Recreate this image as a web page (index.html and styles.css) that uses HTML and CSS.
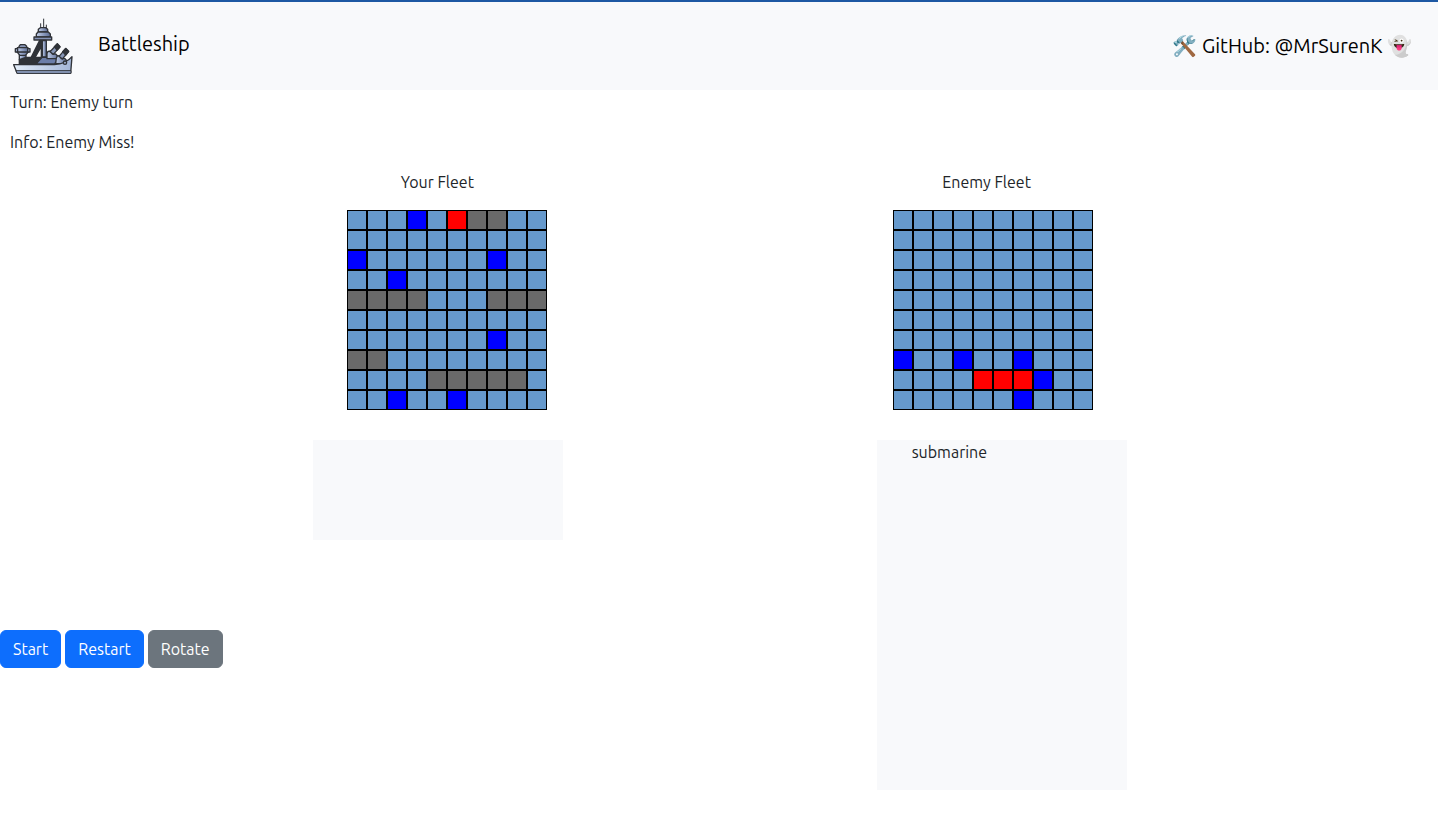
FILE: index.html
```html
<!DOCTYPE html>
<html lang="en">
<head>
<meta charset="utf-8">
<title>Battleship</title>
<link rel="stylesheet" href="styles.css">
</head>
<body>
<header class="navbar">
  <div class="brand">
    <svg class="logo" viewBox="0 0 210 192" aria-hidden="true">
      <defs>
        <linearGradient id="hull" x1="0" y1="0" x2="1" y2="0"><stop offset="0" stop-color="#e4eefa"/><stop offset="1" stop-color="#a3b5d6"/></linearGradient>
        <linearGradient id="steel" x1="0" y1="0" x2="1" y2="0"><stop offset="0" stop-color="#c3d0ea"/><stop offset="1" stop-color="#596a94"/></linearGradient>
      </defs>
      <g stroke="#303338" stroke-width="4" stroke-linejoin="round">
        <path d="M107 14V42M98 28V46M115 32V46" fill="none" stroke-width="3"/>
        <path d="M91 54V46L97 41H113L119 46V54Z" fill="url(#steel)"/>
        <path d="M85 69V60L90 54H121L127 60V69Z" fill="url(#steel)"/>
        <path d="M78 69H131V78H78Z" fill="#8593b5"/>
        <path d="M95 79L70 129H82L100 97V129H114V79Z" fill="#303338"/>
        <path d="M103 80H115V129H103Z" fill="url(#steel)"/>
        <path d="M34 120H54V137H34Z" fill="url(#steel)"/>
        <path d="M26 113H62L52 124H36Z" fill="url(#steel)"/>
        <path d="M33 101V97L37 92H51L56 97V101Z" fill="#8795b5"/>
        <path d="M28 101H60V114H28Z" fill="url(#steel)"/>
        <path d="M22 104H29V114H22ZM59 104H66V114H59Z" fill="#9aaac9"/>
        <path d="M34 137L54 130H102L86 153H34Z" fill="#303338"/>
        <path d="M102 130H158L139 150H84Z" fill="#6b7da8"/>
        <path d="M117 118L120 112L128 111L133 120H143L151 128V134H117Z" fill="url(#steel)"/>
        <path d="M126 113L148 90L156 99L136 121Z" fill="#8796b7"/>
        <path d="M139 98L148 89L156 98L147 108Z" fill="#303338"/>
        <path d="M145 132L148 126L156 125L160 134H171L178 142V149H143Z" fill="url(#steel)"/>
        <path d="M153 127L173 104L182 113L163 135Z" fill="#8796b7"/>
        <path d="M164 113L173 103L182 112L173 123Z" fill="#303338"/>
        <path d="M17 152H139Q174 150 192 128L188 177H27Z" fill="url(#hull)"/>
        <path d="M24 170H189V178H27Z" fill="#91a3c7" stroke-width="3"/>
        <circle cx="171" cy="146" r="5" fill="#9aabca"/>
      </g>
    </svg>
    <span class="brand-name">Battleship</span>
  </div>
  <a class="github" href="#">🛠️ GitHub: @MrSurenK 👻</a>
</header>
<main>
  <p class="status">Turn: Enemy turn</p>
  <p class="status">Info: Enemy Miss!</p>
  <div class="titles">
    <p class="title">Your Fleet</p>
    <p class="title">Enemy Fleet</p>
  </div>
  <div class="boards">
    <div class="board" data-rows="...m.hss.. .......... m......m.. ..m....... ssss...sss .......... .......m.. ss........ ....sssss. ..m..m...."></div>
    <div class="board" data-rows=".......... .......... .......... .......... .......... .......... .......... m..m..m... ....hhhm.. ......m..."></div>
  </div>
  <div class="docks">
    <div class="dock"></div>
    <div class="dock dock-tall">submarine</div>
  </div>
  <div class="actions">
    <button class="btn" type="button">Start</button>
    <button class="btn" type="button">Restart</button>
    <button class="btn btn-gray" type="button">Rotate</button>
  </div>
</main>
<script src="board.js"></script>
</body>
</html>
```
FILE: styles.css
```css
* { box-sizing: border-box; }
body {
  margin: 0;
  border-top: 2px solid #1d58a3;
  background: #fff;
  color: #212529;
  font: 16px/24px Ubuntu, "Noto Sans", sans-serif;
}
p { margin: 0 0 16px; }
.navbar {
  display: flex;
  align-items: center;
  justify-content: space-between;
  padding: 12px 26px 12px 8px;
  background: #f8f9fb;
  color: #000;
  font-size: 20px;
}
.brand { display: flex; align-items: center; gap: 20px; }
.brand-name { padding-bottom: 4px; }
.logo { width: 70px; height: 64px; }
.github { color: inherit; text-decoration: none; }
.status { padding-left: 10px; }
.titles {
  display: flex;
  justify-content: space-evenly;
  padding-right: 14px;
}
.title { width: 224px; text-align: center; }
.boards {
  display: flex;
  justify-content: space-evenly;
  padding-left: 2px;
}
.board { display: grid; grid-template-columns: repeat(10, 20px); }
.cell {
  height: 20px;
  border: 1px solid #000;
  background: #6699cc;
}
.ship { background: #696969; }
.hit { background: #f00; }
.miss { background: #00f; }
.docks {
  display: flex;
  align-items: flex-start;
  justify-content: space-evenly;
  gap: 2px;
  margin-top: 30px;
  padding-left: 2px;
}
.dock { width: 250px; height: 100px; background: #f8f9fb; }
.dock-tall { height: 350px; padding-left: 35px; }
/* The buttons sit beside the tall dock, in the free space on the left. */
.actions {
  display: flex;
  gap: 4px;
  width: fit-content;
  margin: -160px 0 148px;
}
.btn {
  padding: 6px 12px;
  border: 1px solid #0d6efd;
  border-radius: 6px;
  background: #0d6efd;
  color: #fff;
  font: inherit;
}
.btn-gray { border-color: #6c757d; background: #6c757d; }
```
FILE: board.js
```js
const kinds = { s: "ship", h: "hit", m: "miss" };
document.querySelectorAll(".board").forEach((board) => {
  for (const mark of board.dataset.rows.replaceAll(" ", "")) {
    const cell = document.createElement("div");
    cell.className = "cell " + (kinds[mark] || "");
    board.append(cell);
  }
});
```
